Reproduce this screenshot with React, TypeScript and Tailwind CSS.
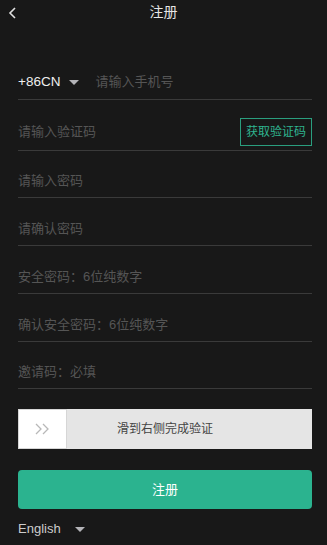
import React from 'react';

const cjk = { fontFamily: '"Liberation Sans", "Noto Sans CJK SC", sans-serif' };

const Caret = ({ className = '' }: { className?: string }) => (
  <svg className={className} width="10" height="5" viewBox="0 0 10 5">
    <path d="M0 0h10L5 5z" fill="#b4b4b8" />
  </svg>
);

const Field = ({ placeholder, h }: { placeholder: string; h: string }) => (
  <div className={`flex items-end border-b border-[#3a3a3a] pb-[7px] ${h}`}>
    <span className="text-[13px] leading-[18px] text-[#555]">{placeholder}</span>
  </div>
);

export default function App() {
  return (
    <div className="w-[327px] h-[545px] bg-[#181818] overflow-hidden" style={cjk}>
      {/* header */}
      <div className="relative h-[28px] flex items-center justify-center">
        <svg className="absolute left-[8px] top-[7px]" width="9" height="12" viewBox="0 0 9 12">
          <path d="M7 1L2 6l5 5" fill="none" stroke="#e0e0e0" strokeWidth="1.6" />
        </svg>
        <span className="text-[14px] text-[#e6e6e6] -mt-[3px]">注册</span>
      </div>

      <div className="px-[18px] pr-[15px]">
        {/* phone */}
        <div className="flex items-end h-[72px] border-b border-[#3a3a3a] pb-[8px]">
          <span className="text-[13.5px] leading-[18px] text-[#eee]">+86CN</span>
          <Caret className="ml-[9px] mb-[6px]" />
          <span className="ml-[16px] text-[13px] leading-[18px] text-[#555]">请输入手机号</span>
        </div>

        {/* sms code */}
        <div className="flex items-end justify-between h-[51px] border-b border-[#3a3a3a] pb-[4px]">
          <span className="text-[13px] leading-[18px] text-[#555] mb-[5px]">请输入验证码</span>
          <button className="h-[28px] px-[5px] border border-[#2a9e7e] text-[12px] text-[#2fb48f]">获取验证码</button>
        </div>

        <Field placeholder="请输入密码" h="h-[47px]" />
        <Field placeholder="请确认密码" h="h-[48px]" />
        <Field placeholder="安全密码：6位纯数字" h="h-[48px]" />
        <Field placeholder="确认安全密码：6位纯数字" h="h-[48px]" />
        <Field placeholder="邀请码：必填" h="h-[47px]" />

        {/* slider */}
        <div className="relative mt-[20px] h-[40px] bg-[#e5e5e5] flex items-center justify-center">
          <div className="absolute left-0 top-0 h-[40px] w-[49px] bg-white border border-[#d6d6d6] flex items-center justify-center">
            <svg width="16" height="12" viewBox="0 0 16 12">
              <path d="M1 1l5 5-5 5M8 1l5 5-5 5" fill="none" stroke="#b8b8b8" strokeWidth="1.3" />
            </svg>
          </div>
          <span className="text-[12px] text-[#444]">滑到右侧完成验证</span>
        </div>

        {/* submit */}
        <button className="mt-[21px] w-full h-[39px] rounded-[4px] bg-[#2bb38f] text-white text-[13px]">注册</button>

        {/* language */}
        <div className="mt-[10px] flex items-center">
          <span className="text-[13px] text-[#ccc]">English</span>
          <Caret className="ml-[14px] mt-[1px]" />
        </div>
      </div>
    </div>
  );
}
